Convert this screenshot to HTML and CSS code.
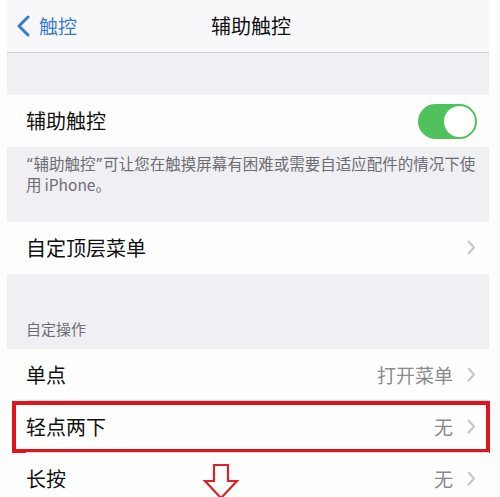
FILE: index.html
```html
<!DOCTYPE html>
<html lang="zh-CN">
<head>
<meta charset="utf-8">
<link rel="stylesheet" href="styles.css">
</head>
<body>
<div class="screen">
  <div class="nav">
    <div class="back">
      <svg class="back-icon" width="14" height="22" viewBox="0 0 14 22"><path d="M12 2 L3 11 L12 20" fill="none" stroke="#3a7bd5" stroke-width="3" stroke-linecap="round" stroke-linejoin="round"/></svg>
      <span>触控</span>
    </div>
    <div class="title">辅助触控</div>
  </div>
  <div class="gap-top"></div>
  <div class="row">
    <span class="label">辅助触控</span>
    <span class="toggle"><span class="knob"></span></span>
  </div>
  <div class="footer"><span class="q">“</span>辅助触控<span class="q">”</span>可让您在触摸屏幕有困难或需要自适应配件的情况下使用<span class="latin">iPhone</span>。</div>
  <div class="row">
    <span class="label">自定顶层菜单</span>
    <svg class="chev" width="9" height="15" viewBox="0 0 9 15"><path d="M1.5 1.5 L7 7.5 L1.5 13.5" fill="none" stroke="#c5c5c9" stroke-width="2" stroke-linecap="round" stroke-linejoin="round"/></svg>
  </div>
  <div class="header">自定操作</div>
  <div class="row sep">
    <span class="label">单点</span>
    <span class="value">打开菜单</span>
    <svg class="chev" width="9" height="15" viewBox="0 0 9 15"><path d="M1.5 1.5 L7 7.5 L1.5 13.5" fill="none" stroke="#c5c5c9" stroke-width="2" stroke-linecap="round" stroke-linejoin="round"/></svg>
  </div>
  <div class="row sep marked">
    <span class="label">轻点两下</span>
    <span class="value">无</span>
    <svg class="chev" width="9" height="15" viewBox="0 0 9 15"><path d="M1.5 1.5 L7 7.5 L1.5 13.5" fill="none" stroke="#c5c5c9" stroke-width="2" stroke-linecap="round" stroke-linejoin="round"/></svg>
    <span class="redbox"></span>
  </div>
  <div class="row last">
    <span class="label">长按</span>
    <span class="value">无</span>
    <svg class="chev" width="9" height="15" viewBox="0 0 9 15"><path d="M1.5 1.5 L7 7.5 L1.5 13.5" fill="none" stroke="#c5c5c9" stroke-width="2" stroke-linecap="round" stroke-linejoin="round"/></svg>
    <svg class="arrow" width="38" height="38" viewBox="0 0 38 38"><path d="M12 2 H26 V18 H35 L19 35 L3 18 H12 Z" fill="#fff" stroke="#d9232a" stroke-width="2.2" stroke-linejoin="miter"/></svg>
  </div>
</div>
</body>
</html>
```
FILE: styles.css
```css
* { box-sizing: border-box; }
html, body { margin: 0; padding: 0; background: #fdfdfd; }
body {
  font-family: "Noto Sans CJK SC", "Noto Sans", sans-serif;
  width: 500px;
  height: 497px;
  overflow: hidden;
}
.screen {
  margin-left: 7px;
  width: 482px;
  background: #efeff4;
}
.nav {
  height: 53px;
  background: #f8f8fa;
  border-bottom: 1px solid #cfcfd3;
  position: relative;
  display: flex;
  align-items: center;
  justify-content: center;
}
.back {
  position: absolute;
  left: 9px;
  top: 15px;
  display: flex;
  align-items: center;
  gap: 9px;
  color: #3a7bd5;
  font-size: 19px;
  line-height: 22px;
}
.title {
  font-size: 20px;
  color: #111;
  margin-left: 6px;
  margin-top: -1px;
}
.gap-top { height: 42px; }
.row {
  height: 52px;
  background: #fefefe;
  display: flex;
  align-items: center;
  padding: 0 13px 2px 19px;
  position: relative;
}
.label {
  font-size: 20px;
  color: #111;
  flex: 1;
}
.value {
  font-size: 19px;
  color: #8a8a8f;
  margin-right: 14px;
}
.chev { display: block; }
.row.sep::after {
  content: "";
  position: absolute;
  left: 19px;
  right: 0;
  bottom: 0;
  height: 1px;
  background: #dcdce0;
}
.toggle {
  width: 59px;
  height: 35px;
  border-radius: 18px;
  background: #4fc25c;
  position: relative;
  margin-right: -1px;
  margin-top: 2px;
}
.knob {
  position: absolute;
  right: 2px;
  top: 2px;
  width: 31px;
  height: 31px;
  border-radius: 50%;
  background: #fff;
}
.footer {
  height: 75px;
  padding: 6px 8px 0 19px;
  font-size: 15.5px;
  line-height: 20px;
  color: #6d6d72;
}
.q { font-family: "Noto Sans", sans-serif; margin: 0 1px; }
.latin { margin-left: 3px; }
.header {
  height: 75px;
  display: flex;
  align-items: flex-end;
  padding: 0 0 10px 19px;
  font-size: 15px;
  color: #6d6d72;
}
.redbox {
  position: absolute;
  left: 5px;
  right: -1px;
  top: 0;
  bottom: 0;
  border: 4px solid #e0141c;
  pointer-events: none;
}
.arrow {
  position: absolute;
  left: 195px;
  top: 10px;
}
```
